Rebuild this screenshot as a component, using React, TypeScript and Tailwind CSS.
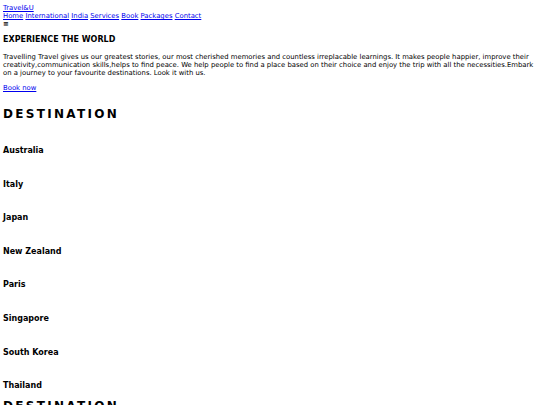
const countries = [
  "Australia",
  "Italy",
  "Japan",
  "New Zealand",
  "Paris",
  "Singapore",
  "South Korea",
  "Thailand",
];

const navLinks = ["Home", "International", "India", "Services", "Book", "Packages", "Contact"];

export default function App() {
  return (
    <div className="min-h-[405px] overflow-hidden bg-white px-[3px] pt-[4px] font-['DejaVu_Sans',sans-serif] text-[6.85px] leading-[8px] text-black">
      {/* header */}
      <div>
        <a href="#" className="text-[#0000ee] underline">Travel&amp;U</a>
      </div>
      <nav>
        {navLinks.map((l, i) => (
          <span key={l}>
            {i > 0 && " "}
            <a href="#" className="text-[#0000ee] underline">
              {l}
            </a>
          </span>
        ))}
      </nav>
      <div>≡</div>

      {/* hero */}
      <h2 className="mt-[7px] text-[8px] font-bold leading-[10px]">EXPERIENCE THE WORLD</h2>
      <p className="mt-[8px]">
        Travelling Travel gives us our greatest stories, our most cherished memories and countless irreplacable
        learnings. It makes people happier, improve their creativity,communication skills,helps to find peace. We help
        people to find a place based on their choice and enjoy the trip with all the necessities.Embark on a journey to
        your favourite destinations. Look it with us.
      </p>
      <div className="mt-[7px]">
        <a href="#" className="text-[#0000ee] underline">Book now</a>
      </div>

      {/* destinations */}
      <h1 className="mt-[15px] text-[12px] font-bold leading-[14px] tracking-[2.3px]">DESTINATION</h1>
      <div className="mt-[25px] flex flex-col gap-[23.6px]">
        {countries.map((c) => (
          <h3 key={c} className="text-[8px] font-bold leading-[10px]">
            {c}
          </h3>
        ))}
      </div>
      <h1 className="mt-[8px] text-[12px] font-bold leading-[14px] tracking-[2.3px]">DESTINATION</h1>
    </div>
  );
}
